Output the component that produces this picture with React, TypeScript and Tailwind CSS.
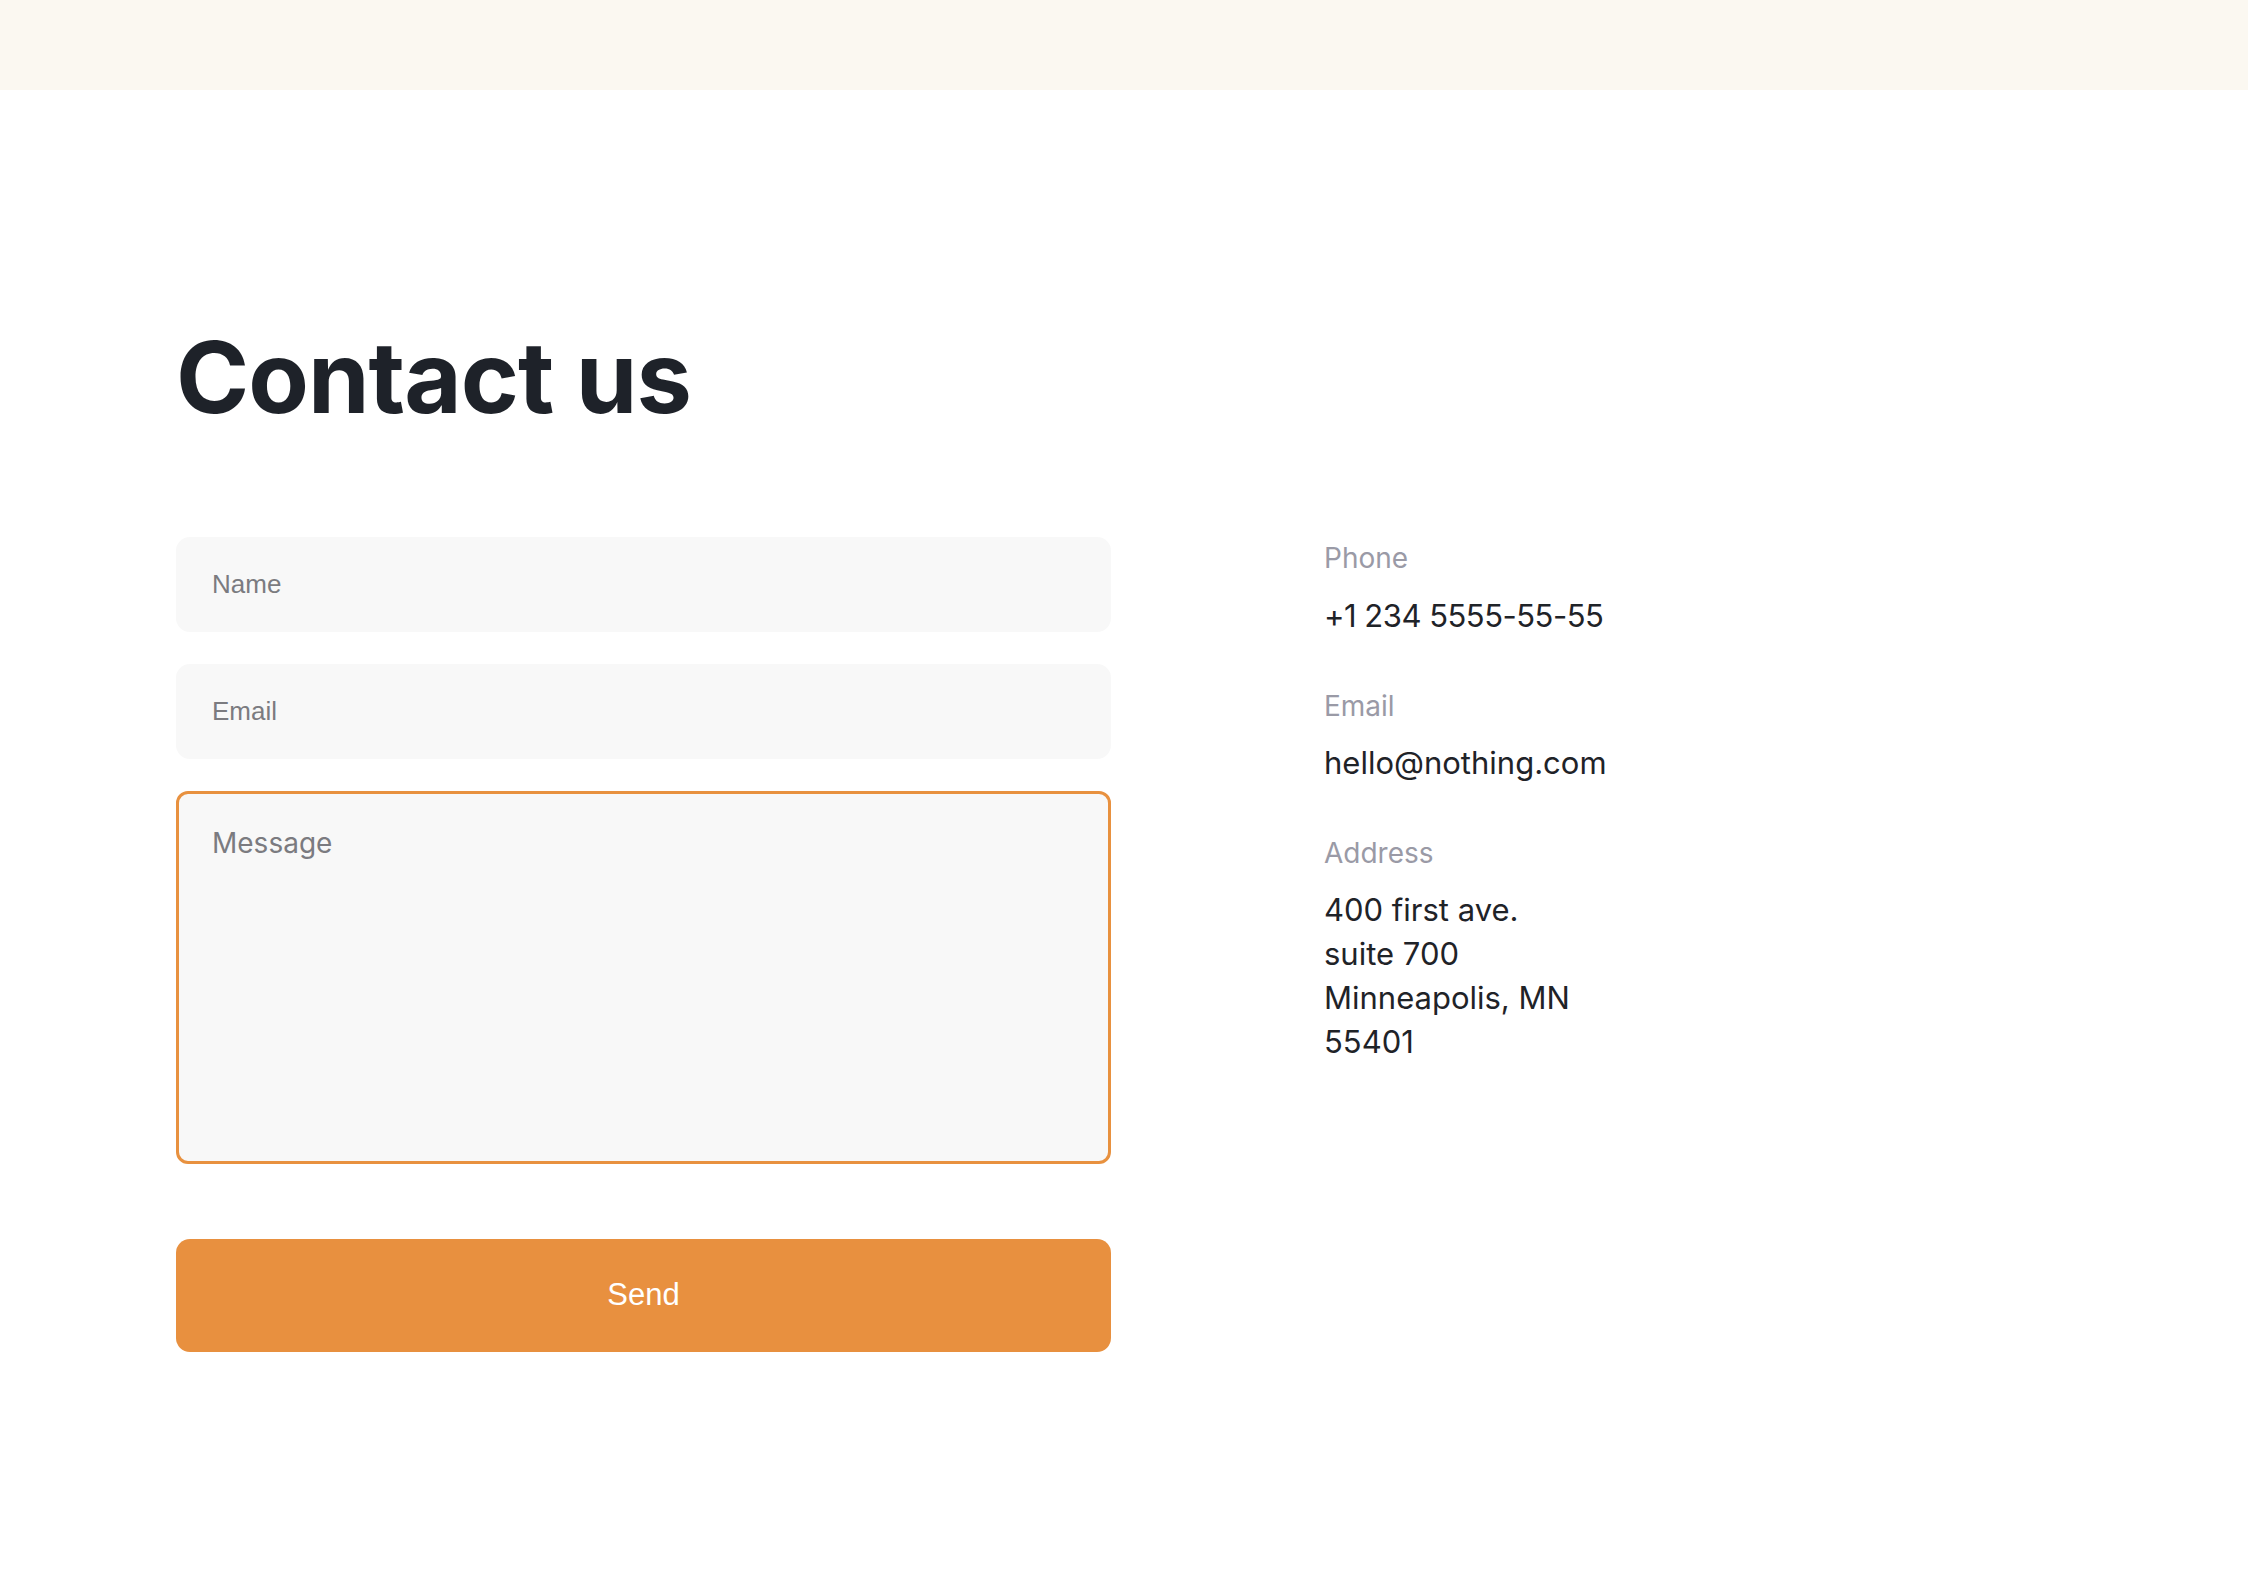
import React from "react";

export default function App() {
  return (
    <div className="min-h-[1576px] w-full bg-white">
      <div className="h-[90px] w-full bg-[#fbf8f1]" />
      <main className="pl-[176px] pt-[238px]">
        <h1
          className="mb-[110px] text-[99px] font-bold leading-none tracking-[-1px] text-[#1e2229]"
          style={{ fontFamily: "Inter, 'Noto Sans', sans-serif" }}
        >
          Contact us
        </h1>
        <div className="flex">
          <form
            className="flex w-[935px] flex-col"
            style={{ fontFamily: "'Liberation Sans', Arial, sans-serif" }}
            onSubmit={(e) => e.preventDefault()}
          >
            <input
              type="text"
              placeholder="Name"
              className="h-[95px] w-full rounded-[14px] bg-[#f8f8f8] px-[36px] text-[26px] text-[#1e2229] outline-none placeholder:text-[#7b7b80]"
            />
            <input
              type="email"
              placeholder="Email"
              className="mt-[32px] h-[95px] w-full rounded-[14px] bg-[#f8f8f8] px-[36px] text-[26px] text-[#1e2229] outline-none placeholder:text-[#7b7b80]"
            />
            <textarea
              placeholder="Message"
              className="mt-[32px] h-[373px] w-full resize-none rounded-[12px] border-[3px] border-[#e8913f] bg-[#f8f8f8] px-[33px] pt-[32px] text-[28px] leading-[34px] text-[#1e2229] outline-none placeholder:text-[#7b7b80]"
              style={{ fontFamily: "Inter, 'Noto Sans', sans-serif" }}
            />
            <button
              type="submit"
              className="mt-[75px] h-[113px] w-full rounded-[14px] bg-[#e8903f] text-[31px] text-white"
            >
              Send
            </button>
          </form>
          <div
            className="ml-[213px] flex flex-col pt-[5px]"
            style={{ fontFamily: "Inter, 'Noto Sans', sans-serif" }}
          >
            <div className="text-[28px] leading-[32px] text-[#9a9aa6]">Phone</div>
            <div className="mt-[20px] text-[31px] leading-[44px] tracking-[-0.5px] text-[#1f2328]">+1 234 5555-55-55</div>
            <div className="mt-[52px] text-[28px] leading-[32px] text-[#9a9aa6]">Email</div>
            <div className="mt-[19px] text-[31px] leading-[44px] text-[#1f2328]">hello@nothing.com</div>
            <div className="mt-[52px] text-[28px] leading-[32px] text-[#9a9aa6]">Address</div>
            <div className="mt-[19px] text-[31px] leading-[44px] text-[#1f2328]">
              400 first ave.
              <br />
              suite 700
              <br />
              Minneapolis, MN
              <br />
              55401
            </div>
          </div>
        </div>
      </main>
    </div>
  );
}
